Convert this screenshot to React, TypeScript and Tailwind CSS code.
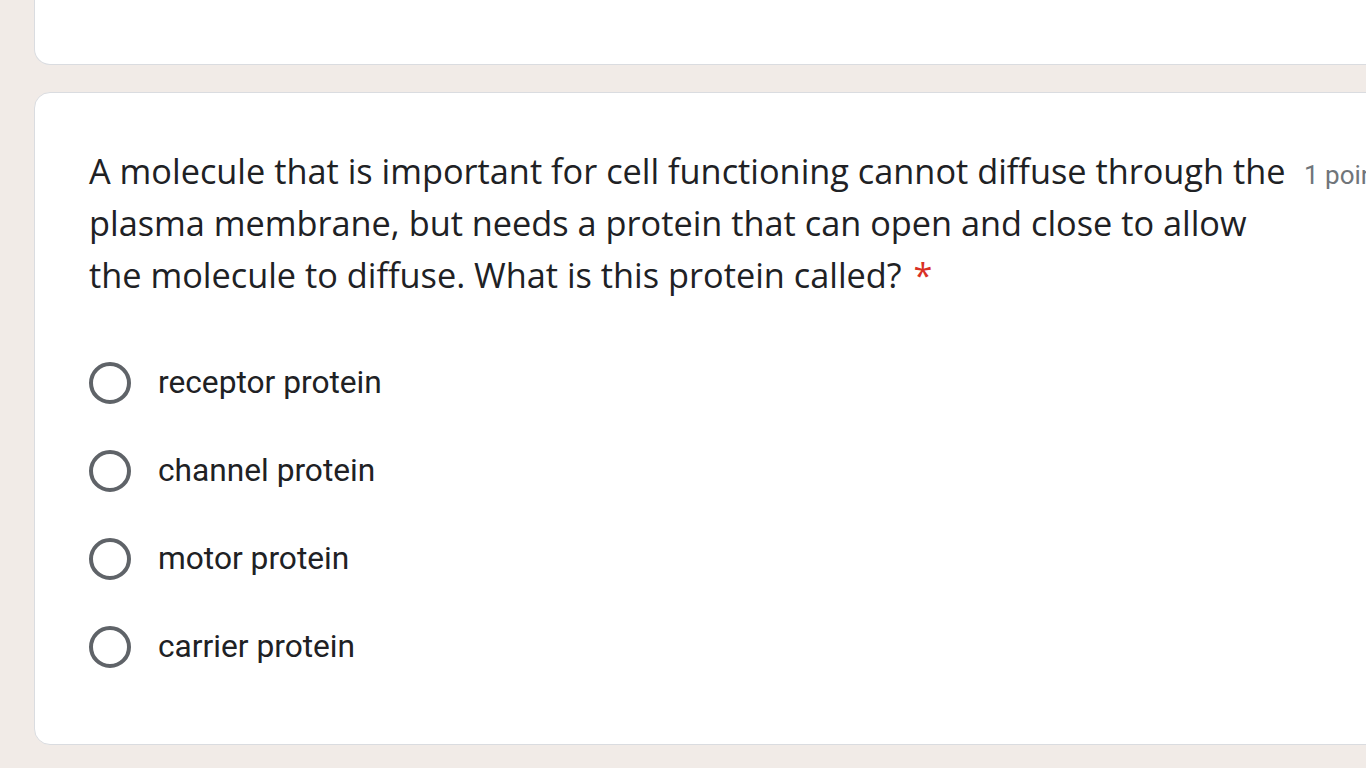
const options = ["receptor protein", "channel protein", "motor protein", "carrier protein"];

const titleLines = [
  "A molecule that is important for cell functioning cannot diffuse through the",
  "plasma membrane, but needs a protein that can open and close to allow",
  "the molecule to diffuse. What is this protein called?",
];

function Radio() {
  return <div className="h-[42px] w-[42px] shrink-0 rounded-full border-[4px] border-[#5f6368]" />;
}

export default function App() {
  return (
    <div className="h-[768px] w-[1366px] overflow-hidden bg-[#f1ebe7] pl-[34px]">
      <div className="h-[65px] w-[1400px] rounded-b-[16px] border border-t-0 border-[#dadce0] bg-white" />

      <div className="mt-[27px] h-[653px] w-[1400px] rounded-[16px] border border-[#dadce0] bg-white pl-[54px] pt-[52px]">
        <div className="flex items-baseline">
          <div className="w-[1215px] font-['Open_Sans',sans-serif] text-[34.3px] leading-[52px] text-[#202124]">
            {titleLines.map((line, i) => (
              <div key={i} className="whitespace-nowrap">
                {line}
                {i === titleLines.length - 1 && <span className="ml-[12px] text-[#d93025]">*</span>}
              </div>
            ))}
          </div>
          <span className="whitespace-nowrap font-['Roboto',sans-serif] text-[26px] text-[#70757a]">1 point</span>
        </div>

        <div className="mt-[38px] flex flex-col">
          {options.map((opt) => (
            <div key={opt} className="flex h-[88px] items-center gap-[27px]">
              <Radio />
              <span className="font-['Roboto',sans-serif] text-[31.7px] text-[#202124]">{opt}</span>
            </div>
          ))}
        </div>
      </div>
    </div>
  );
}
